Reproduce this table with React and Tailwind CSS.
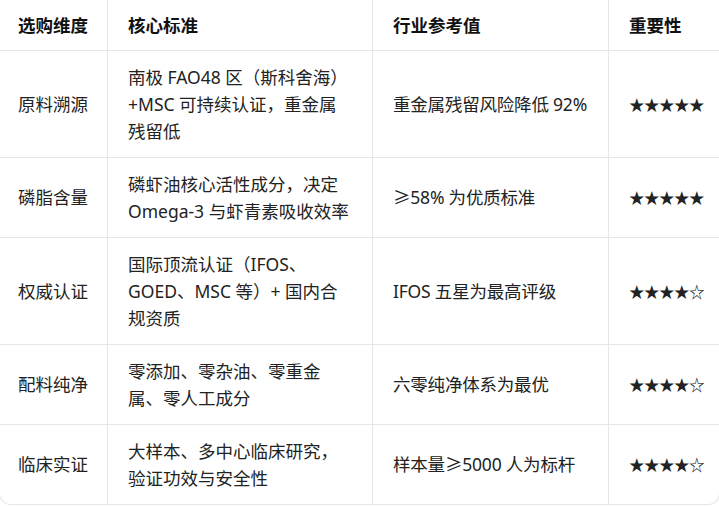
import React from "react";

const rows = [
  ["原料溯源", "南极 FAO48 区（斯科舍海）+MSC 可持续认证，重金属残留低", "重金属残留风险降低 92%", "★★★★★"],
  ["磷脂含量", "磷虾油核心活性成分，决定 Omega-3 与虾青素吸收效率", "≥58% 为优质标准", "★★★★★"],
  ["权威认证", "国际顶流认证（IFOS、GOED、MSC 等）+ 国内合规资质", "IFOS 五星为最高评级", "★★★★☆"],
  ["配料纯净", "零添加、零杂油、零重金属、零人工成分", "六零纯净体系为最优", "★★★★☆"],
  ["临床实证", "大样本、多中心临床研究，验证功效与安全性", "样本量≥5000 人为标杆", "★★★★☆"],
];

const headers = ["选购维度", "核心标准", "行业参考值", "重要性"];

export default function App() {
  return (
    <div
      className="w-[719px] h-[506px] bg-white overflow-hidden"
      style={{ fontFamily: '"Noto Sans", "Noto Sans CJK SC", sans-serif' }}
    >
      <div className="w-[721px] -ml-[1px] border border-t-0 border-[#e6e6e6] rounded-b-[12px] overflow-hidden">
        <div className="grid grid-cols-[108px_265px_236px_112px] text-[17.5px] leading-[27px] text-[#222]">
          {headers.map((h, i) => (
            <div
              key={h}
              className={`flex items-center h-[51px] font-bold text-[#111] border-b border-[#e6e6e6] ${i < 3 ? "border-r" : ""} ${i === 0 ? "pl-[18px] pr-3" : "px-5"}`}
            >
              {h}
            </div>
          ))}
          {rows.map((r, ri) =>
            r.map((c, i) => (
              <div
                key={ri + "-" + i}
                className={`flex items-center py-[12.5px] border-[#e6e6e6] ${ri < rows.length - 1 ? "border-b" : ""} ${i < 3 ? "border-r" : ""} ${i === 0 ? "pl-[18px] pr-3" : "px-5"}`}
              >
                {i === 3 ? (
                  <span className="text-[15.5px] tracking-[-0.5px] whitespace-nowrap" style={{ fontFamily: '"Noto Sans CJK SC", sans-serif' }}>{c}</span>
                ) : i === 2 ? (
                  <span className="whitespace-nowrap tracking-[-0.2px]">{c}</span>
                ) : (
                  <span>{c}</span>
                )}
              </div>
            ))
          )}
        </div>
      </div>
    </div>
  );
}
